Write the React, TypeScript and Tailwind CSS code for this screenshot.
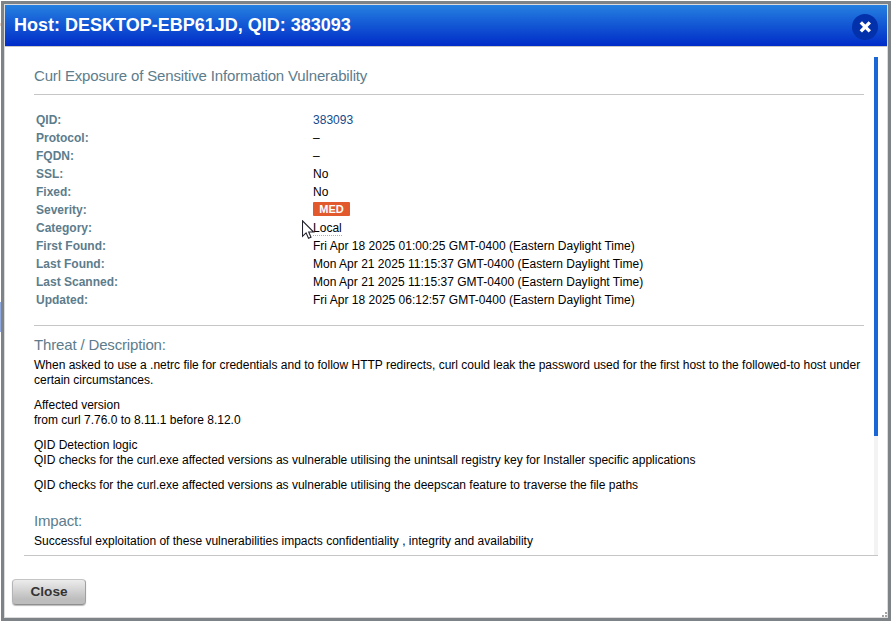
import React from "react";

type Row = { label: string; value: React.ReactNode };

const rows: Row[] = [
  { label: "QID:", value: <a className="text-[#134a8c]">383093</a> },
  { label: "Protocol:", value: "–" },
  { label: "FQDN:", value: "–" },
  { label: "SSL:", value: "No" },
  { label: "Fixed:", value: "No" },
  {
    label: "Severity:",
    value: (
      <span className="mt-[1px] block h-[14px] w-[37px] rounded-[1px] bg-[#e1592d] text-center text-[11px] leading-[15px] font-bold text-white">
        MED
      </span>
    ),
  },
  {
    label: "Category:",
    value: <span className="inline-block h-[17px] border-b border-dotted border-[#8fb4e8]">Local</span>,
  },
  { label: "First Found:", value: "Fri Apr 18 2025 01:00:25 GMT-0400 (Eastern Daylight Time)" },
  { label: "Last Found:", value: "Mon Apr 21 2025 11:15:37 GMT-0400 (Eastern Daylight Time)" },
  { label: "Last Scanned:", value: "Mon Apr 21 2025 11:15:37 GMT-0400 (Eastern Daylight Time)" },
  { label: "Updated:", value: "Fri Apr 18 2025 06:12:57 GMT-0400 (Eastern Daylight Time)" },
];

function Header() {
  return (
    <header className="flex h-[42px] shrink-0 items-center justify-between border-b border-[#c8c8c8] bg-linear-to-b/srgb from-[#2580e0] to-[#002cc8] pr-[9px] pl-[9px]">
      <h1 className="mb-[2px] text-[18px] leading-[20px] font-bold whitespace-nowrap text-white">
        Host: DESKTOP-EBP61JD, QID: 383093
      </h1>
      <button aria-label="Close dialog" className="mt-[3px] size-[26px]">
        <svg viewBox="0 0 26 26" className="block size-[26px]">
          <circle cx="13" cy="13" r="13" fill="#0331ab" />
          <path d="M8.8 8.4l9 9M17.8 8.4l-9 9" stroke="#fff" strokeWidth="3.4" />
        </svg>
      </button>
    </header>
  );
}

function Cursor() {
  return (
    <svg viewBox="0 0 13 20" className="absolute top-[220px] left-[302px] h-[20px] w-[13px]">
      <path
        d="M.5 .8V16.3L4.1 12.9L6.5 18.3L9 17.2L6.7 12H11.6Z"
        fill="#fff"
        stroke="#22222c"
        strokeWidth="1.1"
      />
    </svg>
  );
}

export default function App() {
  return (
    <div className="relative h-[622px] w-[892px] bg-white p-[1px] font-['Liberation_Sans',Arial,sans-serif] text-[12px] text-black">
      {/* Edge of the page behind the dialog, with its selected row */}
      <div className="absolute top-[302px] left-0 h-[30px] w-[1px] bg-[#8fa9e0]" />
      <div className="absolute top-[23px] left-0 h-[3px] w-[1px] bg-[#ecd3c8]" />
      <div className="flex h-[620px] w-[890px] flex-col border-[3px] border-[#7d8386]">
        <div className="flex grow flex-col border border-[#dcdcdc] bg-white">
          <Header />
          <main className="ml-[19px] flex h-[509px] w-[854px] shrink-0 border-b border-[#c6c6c6]">
            <div className="w-[840px] shrink-0 pl-[10px]">
              <h2 className="h-[48px] border-b border-[#c6c6c6] pt-[20px] text-[15px] leading-[18px] tracking-[-0.155px] text-[#5d7c8c]">
                Curl Exposure of Sensitive Information Vulnerability
              </h2>
              <dl className="mt-[16px] pl-[2px]">
                {rows.map((r) => (
                  <div key={r.label} className="flex h-[18px] leading-[18px]">
                    <dt className="w-[277px] font-bold text-[#5d7c8c]">{r.label}</dt>
                    <dd className="tracking-[0.015px]">{r.value}</dd>
                  </div>
                ))}
              </dl>
              <section className="mt-[16px] border-t border-[#c6c6c6] pt-[10px] leading-[15px]">
                <h3 className="h-[22px] text-[15px] leading-[18px] tracking-[-0.155px] text-[#5d7c8c]">
                  Threat / Description:
                </h3>
                <p className="mb-[10px] whitespace-nowrap">
                  When asked to use a .netrc file for credentials and to follow HTTP redirects, curl could leak the
                  password used for the first host to the followed-to host under
                  <br />
                  certain circumstances.
                </p>
                <p className="mb-[10px]">
                  Affected version
                  <br />
                  from curl 7.76.0 to 8.11.1 before 8.12.0
                </p>
                <p className="mb-[10px]">
                  QID Detection logic
                  <br />
                  QID checks for the curl.exe affected versions as vulnerable utilising the unintsall registry key for
                  Installer specific applications
                </p>
                <p>
                  QID checks for the curl.exe affected versions as vulnerable utilising the deepscan feature to traverse
                  the file paths
                </p>
              </section>
              <section className="mt-[19px] leading-[15px]">
                <h3 className="h-[22px] text-[15px] leading-[18px] tracking-[-0.155px] text-[#5d7c8c]">Impact:</h3>
                <p>Successful exploitation of these vulnerabilities impacts confidentiality , integrity and availability</p>
              </section>
            </div>
            <div className="mt-[10px] ml-[10px] w-[4px] bg-[#f3f3f3]">
              <div className="h-[379px] bg-[#1b66d6]" />
            </div>
          </main>
          <footer className="flex grow items-start justify-between pl-[7px]">
            <button className="mt-[23px] h-[26px] w-[74px] rounded-[4px] border border-t-[#c4c4c4] border-r-[#a0a0a0] border-b-[#8f8f8f] border-l-[#b4b4b4] bg-linear-to-b/srgb from-[#ececec] to-[#bdbdbd] to-80% text-[13.6px] leading-[24px] font-bold text-[#333] shadow-[0_1px_1px_#bbb]">
              Close
            </button>
            <svg viewBox="0 0 5 5" className="size-[5px] self-end" fill="#a4a4a4">
              <path d="M3 0h2v2h-2zM0 3h2v2h-2zM3 3h2v2h-2z" />
            </svg>
          </footer>
        </div>
      </div>
      <Cursor />
    </div>
  );
}
